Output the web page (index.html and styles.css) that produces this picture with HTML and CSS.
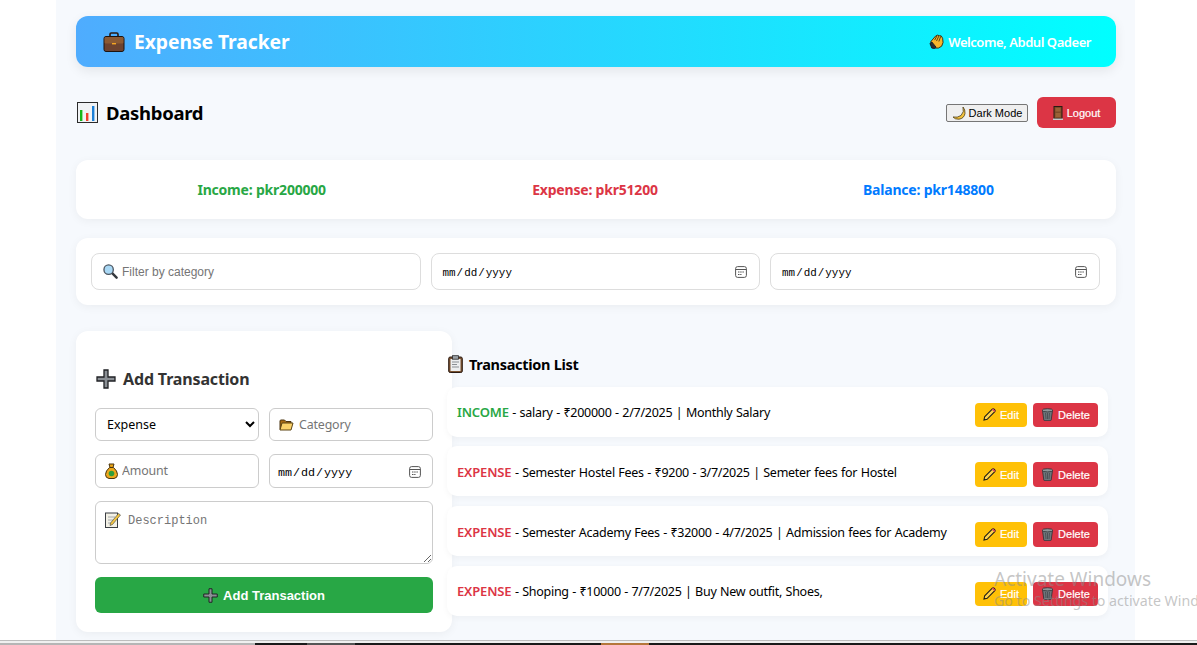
FILE: index.html
```html
<!DOCTYPE html>
<html lang="en">
<head>
    <meta charset="UTF-8">
    <meta name="viewport" content="width=device-width, initial-scale=1.0">
    <title>Expense Tracker</title>
    <link rel="stylesheet" href="styles.css">
</head>
<body>

    <!-- icon sprite, the page uses these in place of emoji -->
    <svg class="sprite" xmlns="http://www.w3.org/2000/svg">
        <symbol id="i-case" viewBox="0 0 22 20">
            <path d="M7 5V2.2Q7 1 8.2 1h5.6Q15 1 15 2.2V5" fill="none" stroke="#2a1a12" stroke-width="1.6"/>
            <rect x="1" y="4.5" width="20" height="15" rx="2" fill="#6d4330" stroke="#1d1410"/>
            <rect x="1.6" y="5" width="18.8" height="6.5" rx="1" fill="#8b5a33"/>
            <rect x="9" y="11" width="4" height="1.4" fill="#f5a623"/>
        </symbol>
        <symbol id="i-chart" viewBox="0 0 21 21">
            <rect x="0.5" y="0.5" width="20" height="20" fill="#f1f3f5" stroke="#2b2b2b"/>
            <rect x="3" y="8" width="2.4" height="11" fill="#17b81a"/>
            <rect x="9" y="11" width="2.4" height="8" fill="#f0402b"/>
            <rect x="15" y="4" width="2.4" height="15" fill="#1c7fd6"/>
        </symbol>
        <symbol id="i-wave" viewBox="0 0 16 16">
            <path d="M2 8 7 2.200 9 1.200 11 1.800 13 2 14.500 4.500 15 9 13.500 13 10 15 6.500 15 3.500 12Z" fill="#f7b52c" stroke="#3a2a10"/>
            <path d="M6 6.500 8.500 2M8 7.500 10.500 2.200M10.500 8 12.500 2.500" stroke="#3a2a10" stroke-width=".9" fill="none"/>
            <path d="M1 10 3 8.500 7.500 14 6 15.500 3 15Z" fill="#2c2f36" stroke="#1c1c1c"/>
        </symbol>
        <symbol id="i-moon" viewBox="0 0 14 14">
            <path d="M11 1Q12.500 6 9 9.500 5.500 12 1 11 3 13.500 7 13.200 12 12.500 13 7.500 13.400 3.500 11 1Z" fill="#f5c33b" stroke="#4a3a12" stroke-width=".8"/>
        </symbol>
        <symbol id="i-door" viewBox="0 0 10 14">
            <rect x="1" y="0.500" width="8" height="12" fill="#7d4b28" stroke="#2a1a12"/>
            <rect x="2.500" y="2" width="5" height="3.500" fill="#9a6236"/>
            <rect x="2.500" y="7" width="5" height="4" fill="#9a6236"/>
            <rect x="0" y="12.500" width="10" height="1.500" fill="#c7c7c7"/>
        </symbol>
        <symbol id="i-search" viewBox="0 0 16 16">
            <path d="M9.500 9.500 14.500 14.500" stroke="#33383d" stroke-width="2.600" stroke-linecap="round"/>
            <circle cx="6" cy="6" r="5" fill="#a9d8f5" stroke="#4a5560" stroke-width="1.400"/>
        </symbol>
        <symbol id="i-plus" viewBox="0 0 20 20">
            <path d="M8 1h4v7h7v4h-7v7H8v-7H1V8h7Z" fill="#8a8f94" stroke="#1f2124" stroke-width="1.300"/>
        </symbol>
        <symbol id="i-folder" viewBox="0 0 15 12">
            <path d="M1 10.500V2Q1 1 2 1h3.500L7 2.500h5V4" fill="#a86a12" stroke="#4b3410"/>
            <path d="M1 11 3 4h11l-2 7Z" fill="#fbd26a" stroke="#5c4414"/>
        </symbol>
        <symbol id="i-bag" viewBox="0 0 13 16">
            <path d="M4 1h5L8 4.500h-3Z" fill="#e8a317" stroke="#4a3510"/>
            <path d="M4.500 4.500h4Q12.500 8 12.500 11.500 12.500 15 9 15.500H4Q.5 15 .5 11.500 .5 8 4.500 4.500Z" fill="#eda81c" stroke="#4a3510"/>
            <circle cx="6.500" cy="10.500" r="2.800" fill="#2e9e3c"/>
        </symbol>
        <symbol id="i-memo" viewBox="0 0 16 16">
            <rect x="0.500" y="1" width="12" height="14.500" fill="#f3f1e6" stroke="#3b3f44"/>
            <path d="M3 5h7M3 8h5M3 11h4" stroke="#a4a8ac"/>
            <path d="M5.500 11 13.500 1.500 15.500 3 7.500 12.500 5 13.500Z" fill="#f4c542" stroke="#3b3f44" stroke-width=".6"/>
        </symbol>
        <symbol id="i-clip" viewBox="0 0 15 18">
            <rect x="0.700" y="2" width="13.600" height="15.500" rx="1.500" fill="#7a5230" stroke="#2a1a12"/>
            <rect x="2.500" y="4" width="10" height="12" fill="#eceeef"/>
            <rect x="4.500" y="0.700" width="6" height="3.500" fill="#9aa0a6" stroke="#2b2b2b" stroke-width=".8"/>
            <path d="M4 7h7M4 9.500h5M4 12h7" stroke="#8a8f94"/>
        </symbol>
        <symbol id="i-pencil" viewBox="0 0 14 14">
            <path d="M1 13 1.800 9.500 10 1.300Q11 .5 12 1.300L12.700 2Q13.500 3 12.700 4L4.500 12.200Z" fill="#fff3c9" fill-opacity=".35" stroke="#1a1a1a" stroke-width="1.100"/>
            <path d="M10.200 1.200 12.800 3.800" stroke="#d8425c" stroke-width="1.600"/>
        </symbol>
        <symbol id="i-trash" viewBox="0 0 12 13">
            <path d="M1 2.500 2.300 12Q2.500 12.700 3.200 12.700H8.800Q9.500 12.700 9.700 12L11 2.500Z" fill="#6f767b" stroke="#2c2f33" stroke-width=".8"/>
            <ellipse cx="6" cy="2.300" rx="5.300" ry="1.600" fill="#8f969a" stroke="#2c2f33" stroke-width=".8"/>
            <path d="M4 5 4.500 11M6 5V11M8 5 7.500 11" stroke="#3f4448" stroke-width=".7"/>
        </symbol>
    </svg>

    <div class="screen">
        <div class="container">

            <header class="topbar">
                <h1 class="brand"><svg class="ic-case"><use href="#i-case"/></svg>Expense Tracker</h1>
                <span class="welcome"><svg class="ic-wave"><use href="#i-wave"/></svg>Welcome, Abdul Qadeer</span>
            </header>

            <div class="dash-row">
                <h2 class="dash-title"><svg class="ic-chart"><use href="#i-chart"/></svg>Dashboard</h2>
                <div class="dash-actions">
                    <button type="button" class="btn-plain"><svg class="ic-moon"><use href="#i-moon"/></svg>Dark Mode</button>
                    <button type="button" class="btn-logout"><svg class="ic-door"><use href="#i-door"/></svg>Logout</button>
                </div>
            </div>

            <section class="card summary">
                <div class="sum-income">Income: pkr200000</div>
                <div class="sum-expense">Expense: pkr51200</div>
                <div class="sum-balance">Balance: pkr148800</div>
            </section>

            <section class="card filters">
                <label class="field field-filter"><svg class="ic-search"><use href="#i-search"/></svg><input type="text" class="filter-input" placeholder="Filter by category"></label>
                <input type="date" class="date-filter">
                <input type="date" class="date-filter">
            </section>

            <div class="lower">
                <form class="card tx-form">
                    <h3 class="form-title"><svg class="ic-plus"><use href="#i-plus"/></svg>Add Transaction</h3>
                    <div class="form-grid">
                        <select class="tx-select">
                            <option>Expense</option>
                            <option>Income</option>
                        </select>
                        <label class="field field-form"><svg class="ic-folder"><use href="#i-folder"/></svg><input type="text" class="form-input" placeholder="Category"></label>
                        <label class="field field-form field-amount"><svg class="ic-bag"><use href="#i-bag"/></svg><input type="text" class="form-input" placeholder="Amount"></label>
                        <input type="date" class="date-form">
                        <label class="field field-desc"><svg class="ic-memo"><use href="#i-memo"/></svg><textarea class="desc-input" placeholder="Description"></textarea></label>
                        <button type="button" class="btn-add"><svg class="ic-plus-sm"><use href="#i-plus"/></svg>Add Transaction</button>
                    </div>
                </form>

                <section class="tx-list">
                    <h3 class="list-title"><svg class="ic-clip"><use href="#i-clip"/></svg>Transaction List</h3>

                    <div class="tx-item">
                        <span class="tx-text"><strong class="income">INCOME</strong> - salary - ₹200000 - 2/7/2025 | Monthly Salary</span>
                        <div class="tx-btns">
                            <button type="button" class="btn-edit"><svg class="ic-small"><use href="#i-pencil"/></svg>Edit</button>
                            <button type="button" class="btn-delete"><svg class="ic-small"><use href="#i-trash"/></svg>Delete</button>
                        </div>
                    </div>
                    <div class="tx-item">
                        <span class="tx-text"><strong class="expense">EXPENSE</strong> - Semester Hostel Fees - ₹9200 - 3/7/2025 | Semeter fees for Hostel</span>
                        <div class="tx-btns">
                            <button type="button" class="btn-edit"><svg class="ic-small"><use href="#i-pencil"/></svg>Edit</button>
                            <button type="button" class="btn-delete"><svg class="ic-small"><use href="#i-trash"/></svg>Delete</button>
                        </div>
                    </div>
                    <div class="tx-item">
                        <span class="tx-text"><strong class="expense">EXPENSE</strong> - Semester Academy Fees - ₹32000 - 4/7/2025 | Admission fees for Academy</span>
                        <div class="tx-btns">
                            <button type="button" class="btn-edit"><svg class="ic-small"><use href="#i-pencil"/></svg>Edit</button>
                            <button type="button" class="btn-delete"><svg class="ic-small"><use href="#i-trash"/></svg>Delete</button>
                        </div>
                    </div>
                    <div class="tx-item">
                        <span class="tx-text"><strong class="expense">EXPENSE</strong> - Shoping - ₹10000 - 7/7/2025 | Buy New outfit, Shoes,</span>
                        <div class="tx-btns">
                            <button type="button" class="btn-edit"><svg class="ic-small"><use href="#i-pencil"/></svg>Edit</button>
                            <button type="button" class="btn-delete"><svg class="ic-small"><use href="#i-trash"/></svg>Delete</button>
                        </div>
                    </div>
                </section>
            </div>
        </div>

        <!-- windows watermark sits over the page -->
        <div class="watermark">
            <div class="wm-big">Activate Windows</div>
            <div class="wm-small">Go to Settings to activate Windows.</div>
        </div>
    </div>

    <div class="taskbar">
        <span class="seg-gray seg-a"></span>
        <span class="seg-dark seg-b"></span>
        <span class="seg-mid seg-c"></span>
        <span class="seg-dark seg-d"></span>
        <span class="seg-orange seg-c"></span>
        <span class="seg-dark seg-rest"></span>
    </div>

</body>
</html>
```

FILE: styles.css
```css
* {
    box-sizing: border-box;
}
html, body {
    margin: 0;
    height: 645px;
    overflow: hidden;
}
body {
    font-family: "Noto Sans", "Open Sans", sans-serif;
    background-color: #fff;
    color: #000;
}
.sprite {
    position: absolute;
    width: 0;
    height: 0;
}
.screen {
    position: relative;
    height: 641px;
    overflow: hidden;
    border-bottom: 1px solid #bdbdbd;
}
.container {
    width: 1079px;
    height: 640px;
    margin-left: 56px;
    padding: 16px 19px 0 20px;
    background-color: #f6f9fd;
}

/* top bar */
.topbar {
    display: flex;
    justify-content: space-between;
    align-items: center;
    height: 51px;
    padding: 0 25px 0 27px;
    border-radius: 12px;
    background: linear-gradient(to right, #4facfe, #00ffff);
    color: #fff;
    box-shadow: 0 4px 12px rgba(0, 0, 0, 0.08);
}
.brand {
    display: flex;
    align-items: center;
    margin: 0;
    font-size: 19.300px;
    font-weight: 700;
    letter-spacing: -0.05px;
}
.ic-case {
    width: 22px;
    height: 20px;
    margin-right: 9px;
}
.welcome {
    display: flex;
    align-items: center;
    font-size: 13px;
    font-weight: 600;
    letter-spacing: -0.45px;
}
.ic-wave {
    width: 15px;
    height: 15px;
    margin-right: 4px;
}

/* dashboard row */
.dash-row {
    display: flex;
    justify-content: space-between;
    align-items: center;
    height: 31px;
    margin: 30px 0 32px;
}
.dash-title {
    display: flex;
    align-items: center;
    margin: 0;
    font-size: 18.500px;
    font-weight: 700;
    letter-spacing: -0.3px;
}
.ic-chart {
    width: 21px;
    height: 21px;
    margin: 0 8px 0 1px;
}
.dash-actions {
    display: flex;
    align-items: center;
    gap: 9px;
}
.btn-plain {
    display: flex;
    align-items: center;
    justify-content: center;
    width: 82px;
    height: 18px;
    padding: 0;
    border: 1px solid #767676;
    border-radius: 2px;
    background-color: #efefef;
    font-family: "Liberation Sans", Arial, sans-serif;
    font-size: 11px;
    color: #000;
}
.ic-moon {
    width: 14px;
    height: 14px;
    margin-right: 3px;
}
.btn-logout {
    display: flex;
    align-items: center;
    justify-content: center;
    width: 79px;
    height: 31px;
    padding: 0;
    border: none;
    border-radius: 6px;
    background-color: #dc3545;
    font-family: "Liberation Sans", Arial, sans-serif;
    font-size: 11px;
    -webkit-text-stroke: 0.2px #fff;
    color: #fff;
}
.ic-door {
    width: 10px;
    height: 14px;
    margin-right: 4px;
}

/* cards */
.card {
    border-radius: 12px;
    background-color: #fff;
    box-shadow: 0 2px 10px rgba(0, 0, 0, 0.05);
}
.summary {
    display: grid;
    grid-template-columns: repeat(3, 1fr);
    align-items: center;
    height: 59px;
    padding: 0 21px 0 19px;
    margin-bottom: 19px;
    text-align: center;
    font-size: 14px;
    font-weight: 700;
    letter-spacing: -0.2px;
}
.sum-income {
    color: #28a745;
}
.sum-expense {
    color: #dc3545;
}
.sum-balance {
    color: #007bff;
}

/* filter bar */
.filters {
    display: grid;
    grid-template-columns: repeat(3, minmax(0, 1fr));
    gap: 9.600px;
    height: 67px;
    padding: 15px 16px 15px 15px;
    margin-bottom: 26px;
}
.field {
    display: flex;
    align-items: center;
    background-color: #fff;
}
.field input {
    flex: 1;
    min-width: 0;
    border: none;
    outline: none;
    padding: 0;
    background: transparent;
}
.field-filter {
    height: 37px;
    padding-left: 11px;
    border: 1px solid #ddd;
    border-radius: 8px;
}
.ic-search {
    width: 15px;
    height: 15px;
    margin-right: 4px;
}
.filter-input {
    font-family: "Liberation Sans", Arial, sans-serif;
    font-size: 12px;
}
.date-filter {
    height: 37px;
    padding: 2px 12px 0 10px;
    border: 1px solid #ddd;
    border-radius: 8px;
    background-color: #fff;
    font-family: "Liberation Mono", monospace;
    font-size: 10.900px;
}
/* outlined calendar instead of the filled default */
input[type="date"]::-webkit-calendar-picker-indicator {
    width: 12px;
    height: 12px;
    padding: 0;
    margin: 0 0 2px;
    background: url("data:image/svg+xml,%3Csvg xmlns='http://www.w3.org/2000/svg' viewBox='0 0 12 12'%3E%3Crect x='.6' y='.6' width='10.800' height='10.800' rx='2' fill='none' stroke='%23555'/%3E%3Cpath d='M1 3.500h10' stroke='%23555'/%3E%3Cpath d='M3 6h6M3 8.500h3.500' stroke='%23555' stroke-dasharray='1.500 .7'/%3E%3C/svg%3E") no-repeat center / 12px 12px;
}

/* lower area */
.lower {
    display: flex;
    align-items: flex-start;
}
.tx-form {
    flex: none;
    width: 376px;
    height: 301px;
    padding: 19px;
}
.form-title {
    display: flex;
    align-items: center;
    height: 24px;
    margin: 17px 0 17px;
    font-size: 16px;
    font-weight: 700;
    letter-spacing: -0.15px;
    color: #333;
}
.ic-plus {
    width: 20px;
    height: 20px;
    margin: 0 7px 0 1px;
}
.form-grid {
    display: grid;
    grid-template-columns: 164px 164px;
    grid-template-rows: 33px 34px 63px 36px;
    gap: 13px 10px;
}
.tx-select {
    padding: 0 4px 0 7px;
    border: 1px solid #ccc;
    border-radius: 6px;
    background-color: #fff;
    font-family: "Noto Sans", sans-serif;
    font-size: 12.500px;
    color: #000;
}
.field-form {
    padding-left: 9px;
    border: 1px solid #ccc;
    border-radius: 6px;
}
.ic-folder {
    width: 15px;
    height: 12px;
    margin-right: 5px;
}
.ic-bag {
    width: 13px;
    height: 16px;
    margin-right: 4px;
}
.field-amount input {
    padding-bottom: 2px;
}
.form-input {
    font-family: "Noto Sans", sans-serif;
    font-size: 12.400px;
    letter-spacing: -0.15px;
}
.date-form {
    padding: 3px 11px 0 7px;
    border: 1px solid #ccc;
    border-radius: 6px;
    background-color: #fff;
    font-family: "Liberation Mono", monospace;
    font-size: 11.700px;
}
.field-desc {
    grid-column: 1 / 3;
    align-items: stretch;
    padding: 9px 0 0 9px;
    border: 1px solid #ccc;
    border-radius: 6px;
    overflow: hidden;
}
.ic-memo {
    flex: none;
    width: 16px;
    height: 16px;
    margin: 1px 7px 0 0;
}
.desc-input {
    flex: 1;
    min-width: 0;
    border: none;
    outline: none;
    padding: 3px 0 0;
    font-family: "Liberation Mono", monospace;
    font-size: 12px;
    background: transparent;
}
.btn-add {
    grid-column: 1 / 3;
    display: flex;
    align-items: center;
    justify-content: center;
    border: none;
    border-radius: 6px;
    background-color: #28a745;
    font-family: "Liberation Sans", Arial, sans-serif;
    font-size: 13px;
    font-weight: 700;
    color: #fff;
}
.ic-plus-sm {
    width: 15px;
    height: 15px;
    margin-right: 5px;
}

/* transaction list */
.tx-list {
    flex: none;
    width: 661px;
    margin-left: -5px;
}
.list-title {
    display: flex;
    align-items: center;
    height: 24px;
    margin: 21px 0 10.600px;
    font-size: 14.500px;
    font-weight: 700;
    letter-spacing: -0.3px;
}
.ic-clip {
    width: 15px;
    height: 18px;
    margin: 0 6px 0 1px;
}
.tx-item {
    display: flex;
    justify-content: space-between;
    align-items: center;
    height: 50.200px;
    padding: 0 10px;
    margin-bottom: 9.500px;
    border-radius: 10px;
    background-color: #fff;
    box-shadow: 0 2px 6px rgba(0, 0, 0, 0.04);
    font-size: 12.500px;
    letter-spacing: -0.27px;
    word-spacing: 0.5px;
}
.tx-text {
    padding-top: 1px;
}
.income, .expense {
    font-size: 13px;
    font-weight: 600;
    letter-spacing: -0.15px;
}
.income {
    color: #28a745;
}
.expense {
    color: #dc3545;
}
.tx-btns {
    display: flex;
    gap: 6px;
    margin-top: 6.400px;
}
.tx-btns button {
    display: flex;
    align-items: center;
    justify-content: center;
    height: 24.600px;
    padding: 0;
    border: none;
    border-radius: 4px;
    font-family: "Liberation Sans", Arial, sans-serif;
    font-size: 11px;
    letter-spacing: 0;
    word-spacing: 0;
    -webkit-text-stroke: 0.2px #fff;
    color: #fff;
}
.btn-edit {
    width: 52px;
    background-color: #ffc107;
}
.btn-delete {
    width: 65px;
    background-color: #dc3545;
}
.ic-small {
    width: 13px;
    height: 13px;
    margin-right: 4px;
}

/* watermark */
.watermark {
    position: absolute;
    left: 994px;
    top: 567px;
    width: 203px;
    overflow: hidden;
    white-space: nowrap;
    color: rgba(140, 140, 140, 0.5);
    pointer-events: none;
}
.wm-big {
    font-size: 19px;
    line-height: 24px;
}
.wm-small {
    font-size: 14.200px;
    line-height: 20px;
}

/* strip of the window behind, along the bottom edge */
.taskbar {
    display: flex;
    align-items: flex-end;
    height: 4px;
    background-color: #f0f0f0;
}
.taskbar span {
    height: 2px;
}
.seg-gray {
    background-color: #b5b5b5;
}
.seg-dark {
    background-color: #1a1a1a;
}
.seg-mid {
    background-color: #555;
}
.seg-orange {
    background-color: #b5763a;
}
.seg-a {
    width: 255px;
}
.seg-b {
    width: 52px;
}
.seg-c {
    width: 48px;
}
.seg-d {
    width: 246px;
}
.seg-rest {
    flex: 1;
}
```
